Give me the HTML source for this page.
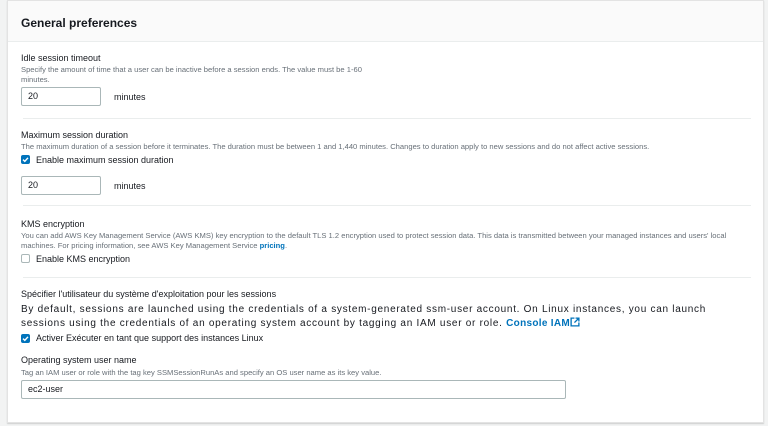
<!DOCTYPE html>
<html><head><style>
*{margin:0;padding:0;box-sizing:border-box}
body{width:768px;height:426px;background:#f2f3f3;font-family:"Liberation Sans",sans-serif;color:#16191f;position:relative;overflow:hidden}
.card{position:absolute;left:7px;top:0;width:757px;height:423px;background:#fff;border:1px solid #e3e3e3;box-shadow:0 1px 1px rgba(0,0,0,.15)}
.hdr{position:absolute;left:0;top:0;right:0;height:41px;background:#fafafa;border-bottom:1px solid #eaeded}
.a{position:absolute;white-space:nowrap}
.t{font-size:9px}
.d{font-size:7.6px;color:#687078}
.in{position:absolute;border:1px solid #aab7b8;border-radius:2px;font-size:9px;padding-left:6px;line-height:16px;background:#fff}
.hr{position:absolute;left:15px;width:728px;height:1px;background:#eaeded}
.cb{position:absolute;width:9px;height:9px;border-radius:2px}
.on{background:#0073bb}
.off{border:1px solid #aab7b8}
.b{font-size:10px;letter-spacing:0.72px}
</style></head><body>
<div class="card">
<div class="hdr"></div>
<div class="a" style="left:13px;top:15px;font-size:12px;font-weight:bold">General preferences</div>
<div class="a t" style="left:13px;top:52px">Idle session timeout</div>
<div class="a d" style="left:13px;top:64px">Specify the amount of time that a user can be inactive before a session ends. The value must be 1-60</div>
<div class="a d" style="left:13px;top:74px">minutes.</div>
<div class="in" style="left:13px;top:86px;width:80px;height:19px">20</div>
<div class="a t" style="left:106px;top:91px">minutes</div>
<div class="hr" style="top:117px"></div>
<div class="a t" style="left:13px;top:129px">Maximum session duration</div>
<div class="a d" style="left:13px;top:141px">The maximum duration of a session before it terminates. The duration must be between 1 and 1,440 minutes. Changes to duration apply to new sessions and do not affect active sessions.</div>
<svg class="cb on" style="left:13px;top:154px" viewBox="0 0 9 9"><path d="M2 4.6l1.8 1.8L7 2.8" stroke="#fff" stroke-width="1.4" fill="none"/></svg>
<div class="a t" style="left:28px;top:154px">Enable maximum session duration</div>
<div class="in" style="left:13px;top:175px;width:80px;height:19px">20</div>
<div class="a t" style="left:106px;top:180px">minutes</div>
<div class="hr" style="top:204px"></div>
<div class="a t" style="left:13px;top:218px">KMS encryption</div>
<div class="a d" style="left:13px;top:230px">You can add AWS Key Management Service (AWS KMS) key encryption to the default TLS 1.2 encryption used to protect session data. This data is transmitted between your managed instances and users' local</div>
<div class="a d" style="left:13px;top:240px">machines. For pricing information, see AWS Key Management Service <b style="color:#0073bb">pricing</b>.</div>
<div class="cb off" style="left:13px;top:253px"></div>
<div class="a t" style="left:28px;top:253px">Enable KMS encryption</div>
<div class="hr" style="top:276px"></div>
<div class="a t" style="left:13px;top:288px">Spécifier l'utilisateur du système d'exploitation pour les sessions</div>
<div class="a b" style="left:13px;top:303px">By default, sessions are launched using the credentials of a system-generated ssm-user account. On Linux instances, you can launch</div>
<div class="a b" style="left:13px;top:316px">sessions using the credentials of an operating system account by tagging an IAM user or role. <b style="color:#0073bb;letter-spacing:0.3px">Console IAM</b><svg width="10" height="10" viewBox="0 0 9 9" style="vertical-align:-1px"><path d="M4 1H1v7h7V5M5 1h3v3M8 1L4 5" stroke="#0073bb" stroke-width="1.2" fill="none"/></svg></div>
<div class="cb on" style="left:13px;top:333px"><svg width="9" height="9" viewBox="0 0 9 9" style="position:absolute"><path d="M2 4.6l1.8 1.8L7 2.8" stroke="#fff" stroke-width="1.4" fill="none"/></svg></div>
<div class="a t" style="left:28px;top:332px">Activer Exécuter en tant que support des instances Linux</div>
<div class="a t" style="left:13px;top:354px">Operating system user name</div>
<div class="a d" style="left:13px;top:367px">Tag an IAM user or role with the tag key SSMSessionRunAs and specify an OS user name as its key value.</div>
<div class="in" style="left:13px;top:379px;width:545px;height:19px">ec2-user</div>
</div>
</body></html>
